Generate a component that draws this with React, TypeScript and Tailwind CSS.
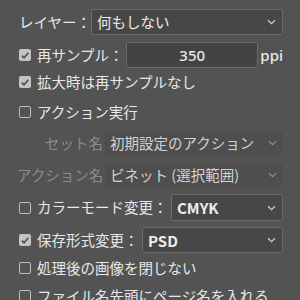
import React from 'react';

const Chevron: React.FC<{ dim?: boolean }> = ({ dim }) => (
    <svg width="9" height="6" viewBox="0 0 9 6" className={dim ? 'text-[#8f8f8f]' : 'text-[#cfcfcf]'}>
        <path d="M1 1.2 L4.5 4.6 L8 1.2" fill="none" stroke="currentColor" strokeWidth="1.2" />
    </svg>
);

const Check: React.FC<{ checked?: boolean }> = ({ checked }) =>
    checked ? (
        <span className="w-[12px] h-[12px] rounded-[2px] bg-[#c4c4c4] flex items-center justify-center shrink-0">
            <svg width="10" height="9" viewBox="0 0 10 9">
                <path d="M1.8 4.6 L4 6.8 L8.4 1.8" fill="none" stroke="#4d4d4d" strokeWidth="1.6" />
            </svg>
        </span>
    ) : (
        <span className="w-[12px] h-[12px] rounded-[2px] border border-[#bdbdbd] shrink-0" />
    );

const Select: React.FC<{ value: string; className?: string; disabled?: boolean; latin?: boolean }> = ({ value, className = '', disabled, latin }) => (
    <div
        className={`flex items-center justify-between rounded-[2px] pl-[5px] pr-[6px] ${
            disabled ? 'bg-[#4e4e4e] text-[#d2d2d2]' : 'bg-[#474747] border border-[#6b6b6b] text-[#ececec]'
        } ${className}`}
    >
        <span className={`whitespace-nowrap ${latin ? 'font-semibold text-[15px]' : ''}`}>{value}</span>
        <Chevron dim={disabled} />
    </div>
);

const App: React.FC = () => {
    return (
        <div
            className="w-[300px] h-[300px] overflow-hidden bg-[#535353] text-[#e8e8e8] text-[14.5px] leading-none pt-[9px] pl-[19px] pr-[17px]"
            style={{ fontFamily: '"Noto Sans CJK JP", "Noto Sans", sans-serif' }}
        >
            <div className="flex items-center h-[26px]">
                <span className="w-[72px] shrink-0 whitespace-nowrap">レイヤー：</span>
                <Select value="何もしない" className="flex-1 h-[26px]" />
            </div>

            <div className="flex items-center h-[26px] mt-[7px]">
                <Check checked />
                <span className="ml-[6px] w-[89px] shrink-0 whitespace-nowrap">再サンプル：</span>
                <div className="w-[133px] h-[26px] bg-[#434343] border border-[#6b6b6b] rounded-[2px] flex items-center justify-center">
                    <span className="text-[15px] font-medium" style={{ fontFamily: '"Noto Sans", sans-serif' }}>350</span>
                </div>
                <span className="ml-[2px] text-[15px] font-medium" style={{ fontFamily: '"Noto Sans", sans-serif' }}>ppi</span>
            </div>

            <div className="flex items-center h-[20px] mt-[4px]">
                <Check checked />
                <span className="ml-[6px]">拡大時は再サンプルなし</span>
            </div>

            <div className="flex items-center h-[20px] mt-[10px]">
                <Check />
                <span className="ml-[6px]">アクション実行</span>
            </div>

            <div className="flex items-center h-[24px] mt-[9px] -ml-[2px]">
                <span className="w-[86px] text-right text-[#8c8c8c] shrink-0">セット名</span>
                <Select value="初期設定のアクション" disabled className="flex-1 h-[24px] ml-[2px]" />
            </div>

            <div className="flex items-center h-[24px] mt-[8px] -ml-[2px]">
                <span className="w-[86px] text-right text-[#8c8c8c] shrink-0 whitespace-nowrap">アクション名</span>
                <Select value="ビネット (選択範囲)" disabled className="flex-1 h-[24px] ml-[2px]" />
            </div>

            <div className="flex items-center h-[27px] mt-[7px]">
                <Check />
                <span className="ml-[6px] w-[134px] shrink-0 whitespace-nowrap">カラーモード変更：</span>
                <Select value="CMYK" latin className="flex-1 h-[27px]" />
            </div>

            <div className="flex items-center h-[26px] mt-[6px]">
                <Check checked />
                <span className="ml-[6px] w-[105px] shrink-0 whitespace-nowrap">保存形式変更：</span>
                <Select value="PSD" latin className="flex-1 h-[26px]" />
            </div>

            <div className="flex items-center h-[20px] mt-[5px]">
                <Check />
                <span className="ml-[6px]">処理後の画像を閉じない</span>
            </div>

            <div className="flex items-center h-[20px] mt-[8px]">
                <Check />
                <span className="ml-[6px] whitespace-nowrap">ファイル名先頭にページ名を入れる</span>
            </div>
        </div>
    );
};

export default App;
